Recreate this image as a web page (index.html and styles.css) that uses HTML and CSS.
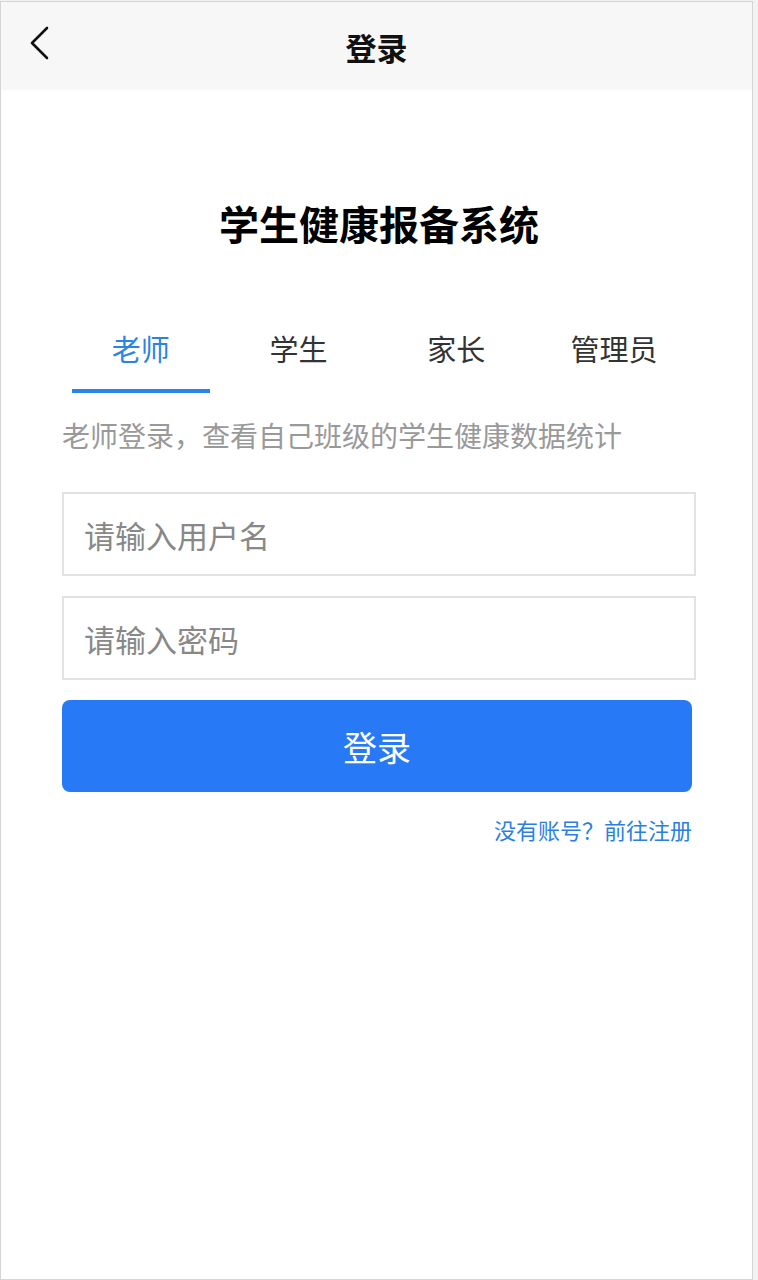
FILE: index.html
```html
<!DOCTYPE html>
<html lang="zh-CN">
<head>
    <meta charset="UTF-8">
    <title>登录</title>
    <link rel="stylesheet" href="styles.css">
</head>
<body>
<div class="frame">
    <div class="header">
        <span class="back">
            <svg width="22" height="34" viewBox="0 0 22 34">
                <path d="M19 2 L4 17 L19 32" fill="none" stroke="#111" stroke-width="2.6" stroke-linecap="round" stroke-linejoin="round"/>
            </svg>
        </span>
        <h2 class="header-title">登录</h2>
    </div>
    <div class="content">
        <h1 class="title">学生健康报备系统</h1>
        <ul class="tabs">
            <li class="tab active">老师</li>
            <li class="tab">学生</li>
            <li class="tab">家长</li>
            <li class="tab">管理员</li>
        </ul>
        <p class="desc">老师登录，查看自己班级的学生健康数据统计</p>
        <div class="field"><input type="text" placeholder="请输入用户名"></div>
        <div class="field"><input type="password" placeholder="请输入密码"></div>
        <button class="btn">登录</button>
        <p class="register"><a href="#">没有账号？前往注册</a></p>
    </div>
</div>
</body>
</html>
```

FILE: styles.css
```css
* {
    margin: 0;
    padding: 0;
    box-sizing: border-box;
}

html, body {
    height: 100%;
}

body {
    background: #f2f2f2;
    font-family: "Noto Sans CJK SC", "Noto Sans", sans-serif;
    overflow: hidden;
}

ul {
    list-style: none;
}

.frame {
    width: 753px;
    height: 1279px;
    margin-top: 1px;
    border: 1px solid #d4d4d4;
    background: #fff;
}

.header {
    position: relative;
    height: 88px;
    background: #f7f7f7;
    display: flex;
    align-items: center;
    justify-content: center;
}

.back {
    position: absolute;
    left: 27px;
    top: 24px;
}

.header-title {
    font-size: 31px;
    font-weight: 700;
    color: #111;
}

.content {
    padding: 0 56px 0 61px;
}

.title {
    margin-top: 105px;
    text-align: center;
    font-size: 40px;
    font-weight: 700;
    color: #000;
    line-height: 56px;
}

.tabs {
    display: flex;
    margin-top: 58px;
    padding-right: 3px;
}

.tab {
    flex: 1;
    text-align: center;
    font-size: 29px;
    color: #333;
    height: 84px;
    line-height: 78px;
    position: relative;
}

.tab.active {
    color: #2b83e8;
}

.tab.active::after {
    content: "";
    position: absolute;
    left: 10px;
    right: 10px;
    bottom: 0;
    height: 4px;
    background: #2b83e8;
}

.desc {
    margin-top: 22px;
    font-size: 28px;
    color: #999;
    line-height: 40px;
}

.field {
    margin-top: 20px;
}

.field:first-of-type {
    margin-top: 37px;
}

.field input {
    width: 100%;
    height: 84px;
    border: 2px solid #e2e2e2;
    padding: 0 20px;
    font-size: 31px;
    font-family: inherit;
    color: #333;
    outline: none;
}

.field input::placeholder {
    color: #888;
}

.btn {
    display: block;
    width: 630px;
    height: 92px;
    margin-top: 20px;
    border: 0;
    border-radius: 8px;
    background: #2879f6;
    color: #fff;
    font-size: 34px;
    font-family: inherit;
}

.register {
    width: 630px;
    margin-top: 20px;
    text-align: right;
    font-size: 22px;
    line-height: 34px;
}

.register a {
    color: #2b7fe3;
    text-decoration: none;
}
```
